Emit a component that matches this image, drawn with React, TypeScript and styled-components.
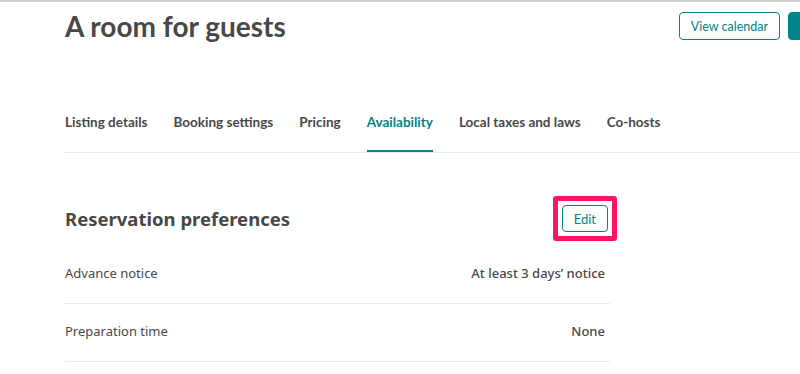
import styled, { createGlobalStyle } from "styled-components";

const GlobalStyle = createGlobalStyle`
  body {
    margin: 0;
    background: #ffffff;
    overflow: hidden;
    font-family: "Noto Sans", "Open Sans", Arial, sans-serif;
    color: #484848;
  }
`;

const Page = styled.div`
  width: 880px;
  border-top: 2px solid #d2d2d2;
`;

const Header = styled.header`
  display: flex;
  justify-content: space-between;
  align-items: flex-start;
  padding: 10px 12px 0 65px;
  height: 86px;
`;

const Title = styled.h1`
  margin: 0;
  font-family: Lato, "Noto Sans", sans-serif;
  font-size: 28px;
  line-height: 28px;
  font-weight: 700;
  color: #484848;
`;

const Actions = styled.div`
  display: flex;
  gap: 8px;
`;

const Button = styled.button<{ $solid?: boolean }>`
  height: 28px;
  padding: 0 11px;
  border: 1px solid #008489;
  border-radius: 4px;
  background: ${(p) => (p.$solid ? "#008489" : "#ffffff")};
  color: ${(p) => (p.$solid ? "#ffffff" : "#008489")};
  font-family: Lato, "Noto Sans", sans-serif;
  font-size: 12.5px;
  cursor: pointer;
  min-width: ${(p) => (p.$solid ? "80px" : "auto")};
`;

const Main = styled.main`
  padding-left: 65px;
`;

const Tabs = styled.nav`
  display: flex;
  gap: 26px;
  border-bottom: 1px solid #ebebeb;
  padding-top: 14px;
`;

const Tab = styled.a<{ $active?: boolean }>`
  padding-bottom: 18px;
  font-family: Lato, "Noto Sans", sans-serif;
  font-size: 13.5px;
  line-height: 20px;
  font-weight: 700;
  color: ${(p) => (p.$active ? "#008489" : "#484848")};
  border-bottom: 2px solid ${(p) => (p.$active ? "#008489" : "transparent")};
  cursor: pointer;
`;

const Section = styled.section`
  width: 545px;
`;

const SectionHead = styled.div`
  display: flex;
  justify-content: space-between;
  align-items: center;
  padding-top: 43px;
`;

const SectionTitle = styled.h2`
  margin: 0;
  font-size: 18.5px;
  font-weight: 700;
  color: #484848;
`;

const Highlight = styled.span`
  display: inline-flex;
  padding: 4px;
  margin-right: -7px;
  border: 5px solid #ff1464;
  border-radius: 3px;
`;

const EditButton = styled(Button)`
  height: 27px;
  padding: 0 11px;
  font-size: 13px;
`;

const Row = styled.div<{ $first?: boolean }>`
  display: flex;
  justify-content: space-between;
  align-items: center;
  height: 54px;
  padding: 0 5px 3px 0;
  border-bottom: 1px solid #ebebeb;
  margin-top: ${(p) => (p.$first ? "5px" : "0")};
`;

const Label = styled.span`
  font-size: 13px;
  color: #484848;
`;

const Value = styled.span`
  font-size: 13px;
  font-weight: 500;
  color: #484848;
`;

const tabs = [
  "Listing details",
  "Booking settings",
  "Pricing",
  "Availability",
  "Local taxes and laws",
  "Co-hosts",
];

const prefs = [
  { label: "Advance notice", value: "At least 3 days’ notice" },
  { label: "Preparation time", value: "None" },
];

const App = () => {
  return (
    <>
      <GlobalStyle />
      <Page>
        <Header>
          <Title>A room for guests</Title>
          <Actions>
            <Button>View calendar</Button>
            <Button $solid aria-label="Preview listing" />
          </Actions>
        </Header>
        <Main>
          <Tabs>
            {tabs.map((t) => (
              <Tab key={t} $active={t === "Availability"}>
                {t}
              </Tab>
            ))}
          </Tabs>
          <Section>
            <SectionHead>
              <SectionTitle>Reservation preferences</SectionTitle>
              <Highlight>
                <EditButton>Edit</EditButton>
              </Highlight>
            </SectionHead>
            {prefs.map((p, i) => (
              <Row key={p.label} $first={i === 0}>
                <Label>{p.label}</Label>
                <Value>{p.value}</Value>
              </Row>
            ))}
          </Section>
        </Main>
      </Page>
    </>
  );
};

export default App;
